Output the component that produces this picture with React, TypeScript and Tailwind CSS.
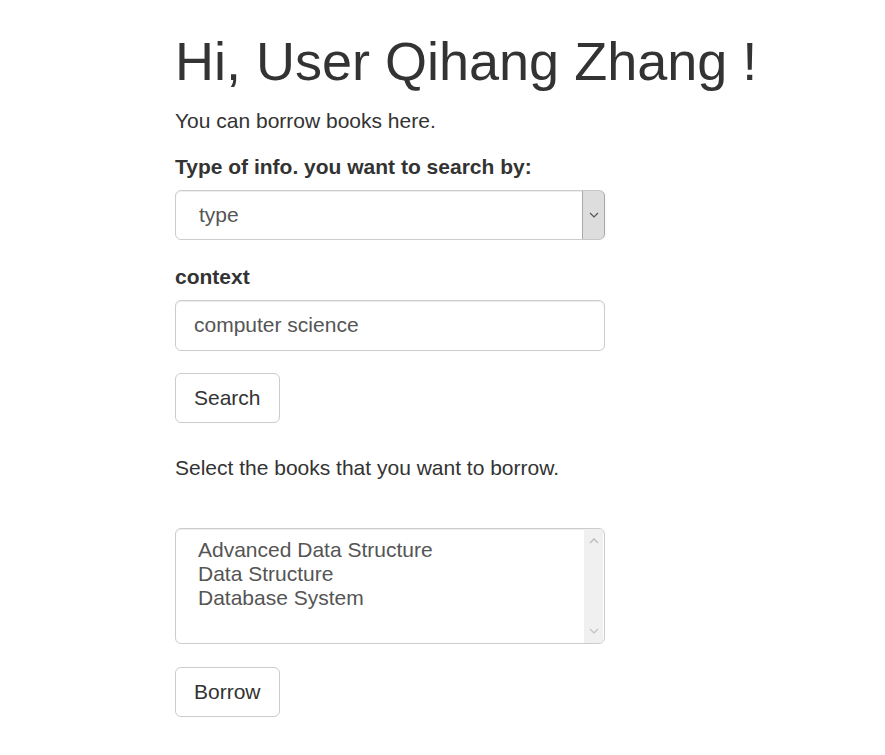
import React, { useState } from 'react';

const books = ['Advanced Data Structure', 'Data Structure', 'Database System'];

function ChevronDown({ className }: { className?: string }) {
  return (
    <svg viewBox="0 0 10 6" className={className} fill="none" stroke="currentColor" strokeWidth="1.2">
      <path d="M1 1l4 4 4-4" />
    </svg>
  );
}

function ChevronUp({ className }: { className?: string }) {
  return (
    <svg viewBox="0 0 10 6" className={className} fill="none" stroke="currentColor" strokeWidth="1.6">
      <path d="M1 5l4-4 4 4" />
    </svg>
  );
}

export default function App() {
  const [searchType] = useState('type');
  const [context, setContext] = useState('computer science');

  return (
    <div className="min-h-[755px] bg-white text-[#333] font-['Liberation_Sans',Arial,sans-serif] text-[21px] leading-[30px]">
      <div className="pl-[175px] pt-[32px]">
        <h1 className="text-[54px] leading-[59.4px] font-normal mb-[15px]">Hi, User Qihang Zhang !</h1>
        <p className="mb-[16px]">You can borrow books here.</p>

        <div className="mb-[22.5px]">
          <label className="inline-block font-bold mb-[7.5px]">Type of info. you want to search by:</label>
          <div className="relative w-[430px] h-[50px] border border-[#ccc] rounded-[6px] shadow-[inset_0_1px_1px_rgba(0,0,0,0.075)] flex items-center">
            <span className="pl-[23px] text-[#555]">{searchType}</span>
            <div className="absolute right-0 top-0 bottom-0 w-[22px] bg-[#dddddd] border-l border-[#a9a9a9] rounded-r-[5px] flex items-center justify-center text-[#555] shadow-[1px_0_1px_rgba(0,0,0,0.2)]">
              <ChevronDown className="w-[10px] h-[6px]" />
            </div>
          </div>
        </div>

        <div className="mb-[22.5px]">
          <label className="inline-block font-bold mb-[7.5px]">context</label>
          <input
            value={context}
            onChange={(e) => setContext(e.target.value)}
            className="block w-[430px] h-[51px] px-[18px] border border-[#ccc] rounded-[6px] text-[#555] shadow-[inset_0_1px_1px_rgba(0,0,0,0.075)] outline-none"
          />
        </div>

        <button className="h-[50px] px-[18px] border border-[#ccc] rounded-[6px] bg-white text-[#333]">Search</button>

        <p className="mt-[30px] mb-[45px]">Select the books that you want to borrow.</p>

        <div className="w-[430px] h-[116px] border border-[#ccc] rounded-[6px] flex overflow-hidden shadow-[inset_0_1px_1px_rgba(0,0,0,0.075)]">
          <div className="flex-1 pl-[22px] pt-[9px] text-[#555] leading-[24px]">
            {books.map((b) => (
              <div key={b}>{b}</div>
            ))}
          </div>
          <div className="w-[19px] mr-[1px] bg-[#f0f0f0] flex flex-col items-center justify-between py-[9px] text-[#c1c1c1]">
            <ChevronUp className="w-[10px] h-[6px]" />
            <ChevronDown className="w-[10px] h-[6px]" />
          </div>
        </div>

        <button className="mt-[23px] h-[50px] px-[18px] border border-[#ccc] rounded-[6px] bg-white text-[#333]">Borrow</button>
      </div>
    </div>
  );
}
